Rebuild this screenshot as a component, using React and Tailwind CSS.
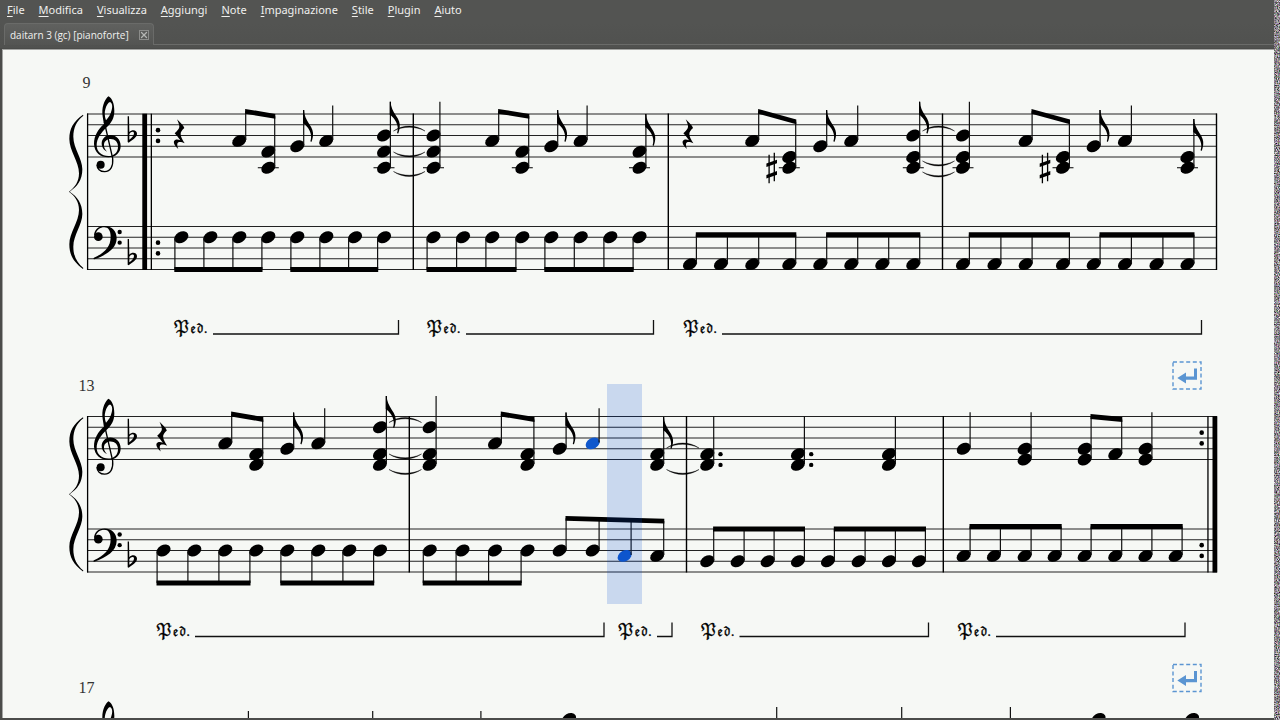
import React from 'react';
import { X } from 'lucide-react';

const MENU = ['File', 'Modifica', 'Visualizza', 'Aggiungi', 'Note', 'Impaginazione', 'Stile', 'Plugin', 'Aiuto'];

const TREBLE = 64;
const BASS = 176.5;
const STEP = 5.375; // half a staff space
const INK = '#000';
const PLAYED = '#1058cc';

const yOf = (staff, step) => staff + step * STEP;

// Each system: beams [staff, dir, y of beam left, y right, notes], single notes, ties, pedals...
// A note is [x, steps, colour].
const SYSTEMS = [
  {
    number: 9,
    shift: 0,
    bars: [413.3, 668.3, 942.5, 1216.5],
    rests: [179, 687.7],
    sharps: [771.7, 1045],
    beams: [
      [TREBLE, 'up', 61.3, 66.3, [[239.3, [5]], [268.3, [7, 10]]]],
      [TREBLE, 'up', 61.3, 66.3, [[492.3, [5]], [522.3, [7, 10]]]],
      [TREBLE, 'up', 61.3, 71.8, [[752.3, [5]], [789.3, [8, 10]]]],
      [TREBLE, 'up', 61.3, 71.8, [[1025.7, [5]], [1063, [8, 10]]]],
      [BASS, 'down', 219.5, 219.5, [[181.3, [2]], [210.3, [2]], [239.3, [2]], [268.3, [2]]]],
      [BASS, 'down', 219.5, 219.5, [[297.3, [2]], [326.3, [2]], [355, [2]], [384, [2]]]],
      [BASS, 'down', 219.5, 219.5, [[433.5, [2]], [463, [2]], [492.3, [2]], [522.3, [2]]]],
      [BASS, 'down', 219.5, 219.5, [[551.3, [2]], [580.7, [2]], [610.3, [2]], [639.5, [2]]]],
      [BASS, 'up', 184.7, 184.7, [[690, [7]], [721, [7]], [752.3, [7]], [789.3, [7]]]],
      [BASS, 'up', 184.7, 184.7, [[820.3, [7]], [851.3, [7]], [882.3, [7]], [913.3, [7]]]],
      [BASS, 'up', 184.7, 184.7, [[963, [7]], [994.5, [7]], [1025.7, [7]], [1063, [7]]]],
      [BASS, 'up', 184.7, 184.7, [[1093.7, [7]], [1125, [7]], [1156.5, [7]], [1187.5, [7]]]],
    ],
    notes: [
      { x: 297.3, steps: [6], top: 60, flag: true },
      { x: 326.3, steps: [5], top: 55.5 },
      { x: 384, steps: [4, 7, 10], top: 51.7, flag: true },
      { x: 433.5, steps: [4, 7, 10], top: 51.7 },
      { x: 551.3, steps: [6], top: 60, flag: true },
      { x: 580.7, steps: [5], top: 55.5 },
      { x: 639.5, steps: [7, 10], top: 64, flag: true },
      { x: 820.3, steps: [6], top: 60, flag: true },
      { x: 851.3, steps: [5], top: 55.5 },
      { x: 913.3, steps: [4, 8, 10], top: 51.7, flag: true },
      { x: 963, steps: [4, 8, 10], top: 51.7 },
      { x: 1093.7, steps: [6], top: 60, flag: true },
      { x: 1125, steps: [5], top: 55.5 },
      { x: 1187.5, steps: [8, 10], top: 69, flag: true },
    ],
    ties: [
      [393.5, 425, 81, -1], [393.5, 425, 102, 1], [393.5, 425, 121.5, 1],
      [922.5, 954.5, 81, -1], [922.5, 954.5, 111, 1], [922.5, 954.5, 122, 1],
    ],
    pedals: [[173, 213, 398.5], [426, 466, 653.5], [682.5, 722, 1201.5]],
  },
  {
    number: 13,
    shift: 0.5,
    lineBreak: true,
    endRepeat: true,
    bars: [409.3, 686.5, 943.3],
    rests: [161.5],
    beams: [
      [TREBLE, 'up', 61.5, 67, [[225.3, [5]], [256.3, [7, 9]]]],
      [TREBLE, 'up', 61.5, 67, [[495, [5]], [527.5, [7, 9]]]],
      [TREBLE, 'up', 64, 67, [[1084.7, [6, 8]], [1115.3, [7]]]],
      [BASS, 'down', 230.5, 230.5, [[163.5, [4]], [194.3, [4]], [225.3, [4]], [256.3, [4]]]],
      [BASS, 'down', 230.5, 230.5, [[287.3, [4]], [318.3, [4]], [349.3, [4]], [380, [4]]]],
      [BASS, 'down', 230.5, 230.5, [[429.7, [4]], [462.5, [4]], [495, [4]], [527.5, [4]]]],
      [BASS, 'up', 165.8, 168.6, [[559.7, [4]], [592.7, [4]], [624.7, [5], PLAYED], [657.3, [5]]]],
      [BASS, 'up', 176.5, 176.5, [[707.3, [6]], [737.7, [6]], [767.7, [6]], [798, [6]]]],
      [BASS, 'up', 176.5, 176.5, [[828, [6]], [858.7, [6]], [889, [6]], [919, [6]]]],
      [BASS, 'up', 174, 174, [[963.7, [5]], [994, [5]], [1024.7, [5]], [1054.7, [5]]]],
      [BASS, 'up', 174, 174, [[1084.7, [5]], [1115.3, [5]], [1145.5, [5]], [1175.7, [5]]]],
    ],
    notes: [
      { x: 287.3, steps: [6], top: 60, flag: true },
      { x: 318.3, steps: [5], top: 55.7 },
      { x: 380, steps: [2, 7, 9], top: 43.5, flag: true },
      { x: 429.7, steps: [2, 7, 9], top: 43.5 },
      { x: 559.7, steps: [6], top: 60, flag: true },
      { x: 592.7, steps: [5], top: 55.7, color: PLAYED },
      { x: 657.3, steps: [7, 9], top: 64.5, flag: true },
      { x: 707.3, steps: [7, 9], top: 64, dotted: true },
      { x: 798, steps: [7, 9], top: 64, dotted: true },
      { x: 889, steps: [7, 9], top: 64 },
      { x: 963.7, steps: [6], top: 59.7 },
      { x: 1024.7, steps: [6, 8], top: 59.7 },
      { x: 1145.5, steps: [6, 8], top: 59.7 },
    ],
    ties: [
      [389, 421.5, 70, -1], [389, 421.5, 101.5, 1], [389, 421.5, 117, 1],
      [666.5, 699, 95.5, -1], [666.5, 699, 117, 1],
    ],
    pedals: [[155.5, 195, 604], [617.3, 657, 672], [700, 739.5, 928.5], [956.7, 996, 1185]],
    cursor: [607, 31.5, 35, 220],
  },
  {
    number: 17,
    shift: 1,
    lineBreak: true,
    notes: [
      { x: 242, steps: [6], top: 56 },
      { x: 366.3, steps: [6], top: 56 },
      { x: 474.5, steps: [6], top: 56 },
      { x: 569, steps: [0], top: 63 },
      { x: 770.3, steps: [6], top: 52 },
      { x: 895.3, steps: [6], top: 52 },
      { x: 1004, steps: [6], top: 52 },
      { x: 1098.5, steps: [0], top: 63 },
      { x: 1192, steps: [0], top: 63 },
    ],
  },
];

const Staff = ({ y }) => (
  <g stroke="#222" strokeWidth="1">
    {[0, 2, 4, 6, 8].map((s) => (
      <line key={s} x1="87" x2="1217" y1={yOf(y, s)} y2={yOf(y, s)} />
    ))}
  </g>
);

const Flat = ({ dy = 0 }) => (
  <path
    fillRule="evenodd"
    transform={`translate(0 ${dy})`}
    d="M203 79H207L208 126C216 117 231 119 231 131C231 143 216 149 206 158L203 156ZM208 132L208 149C215 144 222 137 222 130C222 123 213 124 208 132Z"
  />
);

// Brace, clefs and key signature, drawn on a grid three times finer than the staff
const SystemStart = () => (
  <g transform="translate(60 40) scale(0.33333)">
    <path d="M69 74C40 95 28 115 28 147C28 182 57 215 57 250C57 275 45 292 27 305C45 318 57 335 57 360C57 395 28 428 28 463C28 495 40 515 69 537L70 534C50 517 40 497 40 470C40 435 67 405 67 372C67 340 52 320 29 305C52 290 67 270 67 238C67 205 40 175 40 140C40 113 50 93 70 77Z" />
    <path
      fillRule="evenodd"
      d="M146 19C137 24 126 45 127 70C128 82 130 92 132 102C114 118 102 137 102 162C103 188 122 202 145 202C168 202 182 187 182 168C182 148 168 135 151 135C135 135 125 148 125 160C125 172 132 181 141 185C134 178 131 171 132 163C133 153 142 147 152 147C165 147 174 156 174 170C174 187 162 198 145 198C125 198 110 186 110 166C110 145 124 128 140 112C154 98 163 85 163 62C163 40 156 25 146 19ZM150 36C157 39 158 50 155 60C152 73 146 82 138 91C134 80 133 68 136 58C139 46 144 38 150 36Z"
    />
    <path d="M133 96L158 205C160 228 152 245 134 245C120 245 111 236 111 224" fill="none" stroke="#000" strokeWidth="4" />
    <circle cx="122" cy="224" r="12" />
    <path d="M102 438C102 420 114 408 134 408C156 408 170 423 170 445C170 475 140 495 103 508C100 508 99 505 102 503C132 489 152 472 152 440C152 422 145 412 133 412C120 412 110 420 108 430Z" />
    <circle cx="115" cy="440" r="13" />
    <circle cx="179" cy="426" r="6.5" />
    <circle cx="179" cy="458" r="6.5" />
    <Flat />
    <Flat dy={368} />
  </g>
);

const Rest = ({ x }) => (
  <path
    transform={`translate(${x} 84) scale(0.33333)`}
    d="M-6 -44C3 -35 13 -26 16 -18C9 -12 4 -5 5 1C6 11 11 19 17 28C7 23 -4 22 -5 29C-6 35 -4 40 -2 45C-11 38 -17 28 -15 22C-12 15 -3 16 4 19C-3 10 -9 2 -13 -2C-5 -10 1 -16 1 -22C1 -29 -3 -37 -6 -44Z"
  />
);

const Sharp = ({ x }) => (
  <g transform={`translate(${x} 117.7)`}>
    <path d="M-2.6 -13V15.5M2.6 -15V13.5" stroke="#000" strokeWidth="1.3" />
    <path d="M-5.3 -4.2L5.3 -8V-4.4L-5.3 -0.6ZM-5.3 7.2L5.3 3.4V7L-5.3 10.8Z" />
  </g>
);

const Head = ({ x, y, color = INK }) => (
  <ellipse rx="7.5" ry="5.4" fill={color} transform={`translate(${x} ${y}) rotate(-30)`} />
);

const Heads = ({ x, steps, staff, color }) => (
  <>
    {steps.map((s) => (
      <Head key={s} x={x} y={yOf(staff, s)} color={color} />
    ))}
    {staff === TREBLE && steps.includes(10) && (
      <line x1={x - 10.5} x2={x + 10.5} y1={yOf(staff, 10)} y2={yOf(staff, 10)} stroke="#000" />
    )}
  </>
);

const Note = ({ x, steps, top, flag, dotted, color }) => {
  const sx = x + 6.4;
  return (
    <g>
      <Heads x={x} steps={steps} staff={TREBLE} color={color} />
      <line x1={sx} x2={sx} y1={top} y2={yOf(TREBLE, Math.max(...steps)) - 1} stroke="#111" strokeWidth="1.2" />
      {flag && (
        <path
          transform={`translate(${sx} ${top}) scale(0.33333)`}
          d="M-2 0H1C1 16 8 28 16 41C26 55 29 66 28 76C27 84 26 90 23 96L20 94C25 79 21 66 13 54C8 47 3 42 -2 39Z"
        />
      )}
      {dotted && steps.map((s) => <circle key={s} cx={x + 13.2} cy={yOf(TREBLE, s)} r="2.2" />)}
    </g>
  );
};

const Beam = ({ staff, dir, y1, y2, notes }) => {
  const side = dir === 'up' ? 6.4 : -6.4;
  const xs = notes.map((n) => n[0] + side);
  const first = xs[0];
  const last = xs[xs.length - 1];
  const beamY = (x) => y1 + ((x - first) / (last - first)) * (y2 - y1);
  const h = 2.4;
  return (
    <g>
      {notes.map(([x, steps, color], i) => (
        <g key={x}>
          <Heads x={x} steps={steps} staff={staff} color={color} />
          <line
            x1={xs[i]}
            x2={xs[i]}
            y1={beamY(xs[i])}
            y2={yOf(staff, Math.max(...steps)) + (dir === 'up' ? -1 : 1)}
            stroke="#111"
            strokeWidth="1.2"
          />
        </g>
      ))}
      <path d={`M${first - 0.6} ${y1 - h}L${last + 0.6} ${y2 - h}V${y2 + h}L${first - 0.6} ${y1 + h}Z`} />
    </g>
  );
};

const Tie = ({ x1, x2, y, dir }) => {
  const w = x2 - x1;
  return (
    <path
      d={`M${x1} ${y}C${x1 + w * 0.3} ${y + dir * 5} ${x2 - w * 0.3} ${y + dir * 5} ${x2} ${y}C${x2 - w * 0.3} ${y + dir * 6.6} ${x1 + w * 0.3} ${y + dir * 6.6} ${x1} ${y}Z`}
      stroke="#000"
      strokeWidth="0.4"
    />
  );
};

const Pedal = ({ x, from, to }) => (
  <g>
    <text x={x} y="283" fontSize="16" stroke="#000" strokeWidth="0.3" className="font-['DejaVu_Math_TeX_Gyre','DejaVu_Serif',serif]">
      𝔓<tspan fontSize="12">𝔢𝔡.</tspan>
    </text>
    <path d={`M${from} 284H${to}V270`} fill="none" stroke="#111" strokeWidth="1.3" />
  </g>
);

const RepeatDots = ({ x }) => (
  <>
    {[TREBLE, BASS].map((staff) =>
      [3, 5].map((s) => <circle key={`${staff}-${s}`} cx={x} cy={yOf(staff, s)} r="2.3" />)
    )}
  </>
);

const LineBreak = () => (
  <g>
    <rect x="1173" y="9.5" width="28" height="27" fill="none" stroke="#5b95d2" strokeWidth="1.4" strokeDasharray="4 2.6" />
    <path d="M1177.3 25.5L1186 20V23.9H1194V16H1197V27.2H1186V31Z" fill="#5b95d2" />
  </g>
);

const System = ({ number, shift, bars = [], rests = [], sharps = [], beams = [], notes = [], ties = [], pedals = [], lineBreak, endRepeat, cursor }) => (
  <svg viewBox={`2 ${shift} 1272 303`} className="block w-full" role="img" aria-label={`Battuta ${number}`}>
    <text x="86.5" y="38" fontSize="16" fill="#333" textAnchor="middle" className="font-['Liberation_Serif',serif]">
      {number}
    </text>
    <Staff y={TREBLE} />
    <Staff y={BASS} />
    <SystemStart />
    <line x1="87.6" x2="87.6" y1="63.5" y2="220" stroke="#000" strokeWidth="1.3" />
    {number === 9 && (
      <g>
        <rect x="142.3" y="63.7" width="4.8" height="156.3" />
        <rect x="150.7" y="63.7" width="1.3" height="156.3" />
        <RepeatDots x={158} />
      </g>
    )}
    {bars.map((x) => (
      <line key={x} x1={x} x2={x} y1="63.5" y2="220" stroke="#000" strokeWidth="1.4" />
    ))}
    {endRepeat && (
      <g>
        <RepeatDots x={1201.7} />
        <rect x="1207.3" y="63.7" width="1.3" height="156.3" />
        <rect x="1212.5" y="63.7" width="4.8" height="156.3" />
      </g>
    )}
    {rests.map((x) => <Rest key={x} x={x} />)}
    {sharps.map((x) => <Sharp key={x} x={x} />)}
    {beams.map(([staff, dir, y1, y2, group]) => (
      <Beam key={`${staff}-${group[0][0]}`} staff={staff} dir={dir} y1={y1} y2={y2} notes={group} />
    ))}
    {notes.map((n) => <Note key={n.x} {...n} />)}
    {ties.map(([x1, x2, y, dir]) => <Tie key={`${x1}-${y}`} x1={x1} x2={x2} y={y} dir={dir} />)}
    {pedals.map(([x, from, to]) => <Pedal key={x} x={x} from={from} to={to} />)}
    {lineBreak && <LineBreak />}
    {cursor && (
      <rect x={cursor[0]} y={cursor[1]} width={cursor[2]} height={cursor[3]} fill="rgb(0,70,211)" fillOpacity="0.18" />
    )}
  </svg>
);

// Colour static along the right edge of the window
const Static = () => (
  <svg className="w-[6px] h-full shrink-0 bg-[#8a8a8a]" aria-hidden="true">
    <filter id="static" x="0" y="0" width="100%" height="100%" colorInterpolationFilters="sRGB">
      <feTurbulence type="fractalNoise" baseFrequency="0.9" numOctaves="2" seed="4" />
      <feColorMatrix values="1 0.5 0.5 0 -0.45  0.5 1 0.5 0 -0.47  0.5 0.5 1 0 -0.45  0 0 0 0 1" />
    </filter>
    <rect width="100%" height="100%" filter="url(#static)" />
  </svg>
);

const App = () => {
  return (
    <div className="flex h-screen overflow-hidden bg-[#535452] font-['Open_Sans',sans-serif] text-[#f0f0ee]">
      <div className="flex min-w-0 flex-1 flex-col">
        <nav className="flex h-[23px] shrink-0 items-center bg-[#535452] font-['Noto_Sans',sans-serif] text-[11px] leading-[15px]">
          {MENU.map((item) => (
            <button key={item} type="button" className="px-[7px] pb-[4px] hover:bg-[#6a6b68]">
              <span className="underline underline-offset-2">{item[0]}</span>
              {item.slice(1)}
            </button>
          ))}
        </nav>
        <div className="flex h-[26px] shrink-0 items-start border-b border-[#4a4b49] bg-linear-to-b from-[#535452] to-[#50514f] pl-1">
          <div className="flex h-[22px] w-[150px] items-center justify-between rounded-t-sm border border-b-0 border-[#6a6b69] bg-linear-to-b from-[#60615f] to-[#535452] pl-[5px] pr-1">
            <button type="button" className="whitespace-nowrap text-[10px] leading-[14px]">
              daitarn 3 (gc) [pianoforte]
            </button>
            <button type="button" aria-label="Chiudi" className="flex size-[10px] items-center justify-center border border-[#8b8c8a] text-[#b4b5b3]">
              <X size={10} strokeWidth={3} className="shrink-0" />
            </button>
          </div>
          <div className="h-[22px] flex-1 border-b border-[#6a6b69]" />
        </div>
        <main className="min-h-0 flex-1 overflow-hidden border-b-2 border-l-2 border-[#4b4c4a] bg-[#f6f8f5] pt-px shadow-[inset_1px_1px_0_#a5a6a4]">
          {SYSTEMS.map((s) => (
            <System key={s.number} {...s} />
          ))}
        </main>
      </div>
      <Static />
    </div>
  );
};

export default App;
